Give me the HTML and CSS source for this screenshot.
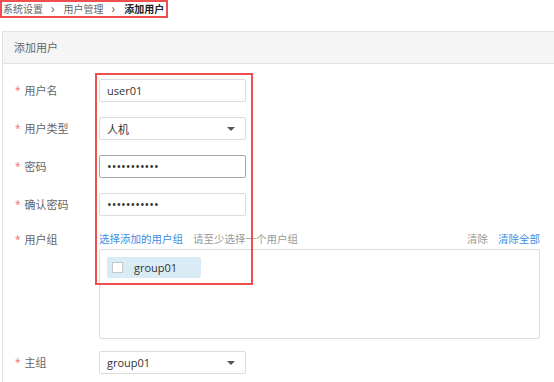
FILE: index.html
```html
<!DOCTYPE html>
<html lang="zh-CN">
<head>
    <meta charset="UTF-8">
    <title>添加用户</title>
    <link rel="stylesheet" href="styles.css">
</head>
<body>
    <div class="breadcrumb">
        <span class="crumb">系统设置</span>
        <span class="sep">›</span>
        <span class="crumb">用户管理</span>
        <span class="sep">›</span>
        <span class="crumb current">添加用户</span>
    </div>

    <div class="panel">
        <div class="panel-head">添加用户</div>
        <div class="panel-body">
            <div class="form-row">
                <label class="label"><span class="star">*</span>用户名</label>
                <input class="field" type="text" value="user01">
            </div>
            <div class="form-row">
                <label class="label"><span class="star">*</span>用户类型</label>
                <div class="field select">
                    <span>人机</span>
                    <span class="caret"></span>
                </div>
            </div>
            <div class="form-row">
                <label class="label"><span class="star">*</span>密码</label>
                <input class="field pwd focused" type="password" value="abcdefghijk">
            </div>
            <div class="form-row">
                <label class="label"><span class="star">*</span>确认密码</label>
                <input class="field pwd" type="password" value="abcdefghijk">
            </div>
            <div class="form-row top">
                <label class="label"><span class="star">*</span>用户组</label>
                <div class="group-field">
                    <div class="group-bar">
                        <a class="link" href="#">选择添加的用户组</a>
                        <span class="hint">请至少选择一个用户组</span>
                        <span class="actions">
                            <span class="muted">清除</span>
                            <a class="link" href="#">清除全部</a>
                        </span>
                    </div>
                    <div class="group-box">
                        <div class="chip">
                            <span class="check"></span>
                            <span>group01</span>
                        </div>
                    </div>
                </div>
            </div>
            <div class="form-row main-group">
                <label class="label"><span class="star">*</span>主组</label>
                <div class="field select">
                    <span>group01</span>
                    <span class="caret"></span>
                </div>
            </div>

            <!-- 标注框 -->
            <div class="highlight"></div>
        </div>
    </div>
</body>
</html>
```

FILE: styles.css
```css
:root {
    --border: #dcdcdc;
    --label: #666666;
    --text: #333333;
    --link: #3a8ee6;
    --mark: #f04f4f;
}

* {
    margin: 0;
    padding: 0;
    box-sizing: border-box;
}

body {
    font-family: "Open Sans", "Noto Sans CJK SC", sans-serif;
    font-size: 10.5px;
    color: var(--text);
    background: #fff;
    overflow: hidden;
}

.breadcrumb {
    display: inline-flex;
    align-items: center;
    height: 18px;
    padding: 0 2px 0 1px;
    border: 2px solid var(--mark);
    color: var(--label);
    font-size: 10px;
    line-height: 14px;
}

.sep {
    margin: 0 9px 0 8px;
    font-size: 12px;
}

.crumb.current {
    font-weight: 700;
    color: #222;
}

.panel {
    margin: 13px -20px 0 2px;
    border: 1px solid #e2e2e2;
}

.panel-head {
    height: 32px;
    line-height: 31px;
    padding-left: 11px;
    background: #f5f5f5;
    border-bottom: 1px solid #e2e2e2;
    color: var(--label);
    font-size: 11px;
}

.panel-body {
    position: relative;
    padding: 15px 0 20px;
}

.form-row {
    display: flex;
    align-items: center;
    margin-bottom: 15px;
}

.form-row.top {
    align-items: flex-start;
    margin-bottom: 12px;
}

.label {
    width: 96px;
    flex: none;
    padding-left: 12px;
    color: var(--label);
    font-size: 11px;
    line-height: 16px;
}

.star {
    color: #f56c6c;
    font-size: 10px;
    margin-right: 4px;
    vertical-align: 1px;
}

.field {
    width: 147px;
    height: 23px;
    padding: 0 7px;
    border: 1px solid var(--border);
    border-radius: 2px;
    font: inherit;
    font-size: 11px;
    color: var(--text);
    background: #fff;
    outline: none;
}

.field.pwd {
    font-size: 12.5px;
}

.field.focused {
    border-color: #a8a8a8;
}

.select {
    display: flex;
    align-items: center;
    justify-content: space-between;
    padding-right: 10px;
}

.caret {
    width: 0;
    height: 0;
    border-left: 4px solid transparent;
    border-right: 4px solid transparent;
    border-top: 4px solid #555;
}

.group-field {
    width: 441px;
}

.group-bar {
    display: flex;
    line-height: 16px;
    margin-bottom: 2px;
}

.link {
    color: var(--link);
    text-decoration: none;
}

.hint {
    margin-left: 10px;
    color: #999;
}

.actions {
    margin-left: auto;
    display: flex;
    gap: 10px;
}

.muted {
    color: #999;
}

.group-box {
    height: 90px;
    padding: 7px;
    border: 1px solid var(--border);
    border-radius: 2px;
}

.chip {
    display: flex;
    align-items: center;
    width: 94px;
    height: 21px;
    padding-left: 5px;
    background: #d9ecf6;
    border-radius: 2px;
    font-size: 11px;
    color: var(--text);
}

.check {
    width: 11px;
    height: 11px;
    margin-right: 11px;
    background: #fff;
    border: 1px solid #c8c8c8;
}

.highlight {
    position: absolute;
    left: 92px;
    top: 9px;
    width: 158px;
    height: 212px;
    border: 2px solid var(--mark);
    pointer-events: none;
}
```
